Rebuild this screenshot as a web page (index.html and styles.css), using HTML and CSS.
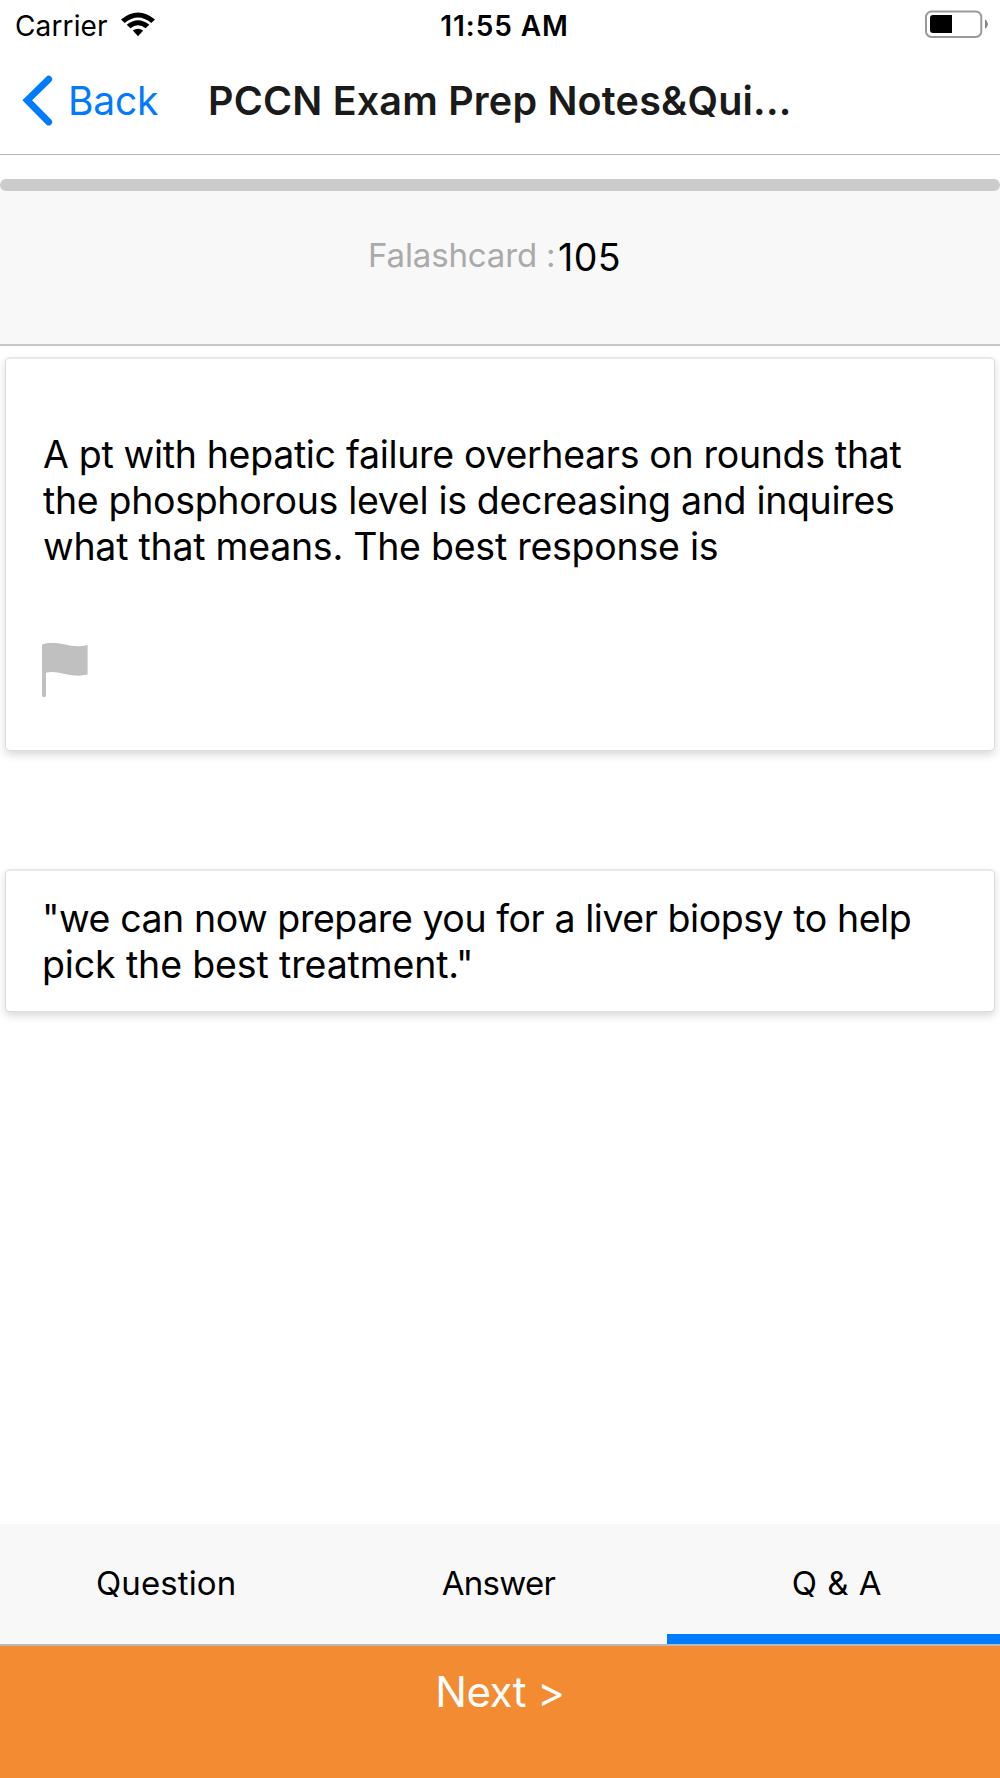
FILE: index.html
```html
<!DOCTYPE html>
<html lang="en">
<head>
<meta charset="utf-8">
<title>PCCN Exam Prep</title>
<link rel="stylesheet" href="styles.css">
</head>
<body>
<div class="screen">
  <div class="status">
    <div class="status-left">
      <span class="carrier">Carrier</span>
      <svg class="wifi" width="36" height="26" viewBox="120 11 36 26">
        <path d="M121 19.4Q138 5.4 155 19.4L151.3 23Q138 12 124.7 23Z"/>
        <path d="M126.7 24.8Q138 15.6 149.3 24.8L145.6 28.3Q138 22.4 130.4 28.3Z"/>
        <path d="M132.8 30.6Q138 26.8 143.2 30.6L138 36.2Z"/>
      </svg>
    </div>
    <span class="clock">11:55 AM</span>
    <div class="status-right">
      <svg class="battery" width="66" height="30" viewBox="924 9 66 30">
        <rect x="926" y="11.5" width="55.3" height="25.4" rx="5.5" fill="#fff" stroke="#999" stroke-width="2"/>
        <path d="M952 15v18H933q-3 0-3-3V18q0-3 3-3Z"/>
        <path d="M985 19.3q3 1.8 3 4.8t-3 4.8Z" fill="#888"/>
      </svg>
    </div>
  </div>
  <header class="nav">
    <svg class="chevron" width="32" height="54" viewBox="22 73 32 54">
      <path d="M48.7 79.2 27.2 100.2 48.7 122" fill="none" stroke="#007aff" stroke-width="6.8" stroke-linecap="round"/>
    </svg>
    <span class="back">Back</span>
    <h1 class="title">PCCN Exam Prep Notes&amp;Qui...</h1>
  </header>
  <div class="progress-wrap"><div class="progress"></div></div>
  <section class="counter">
    <span class="counter-label">Falashcard :</span>
    <span class="counter-value">105</span>
  </section>
  <main class="content">
    <article class="card question">
      <p class="text"><span class="q1">A pt with hepatic failure overhears on rounds that</span><br><span class="q1">the phosphorous level is decreasing and inquires</span><br><span class="q3">what that means. The best response is</span></p>
      <svg class="flag" width="47" height="56" viewBox="42 643 47 56">
        <path d="M42 644.6C49 642 56 642.6 64 644.3C73 646.4 79 647 87.6 645V674.6C80 676.5 73 675.6 65 674C57 672.2 52 671.3 46 672.7V695.5Q46 697.2 44 697.2T42 695.5Z" fill="#c0c0c0"/>
      </svg>
    </article>
    <article class="card answer">
      <p class="text"><span class="a1">"we can now prepare you for a liver biopsy to help</span><br><span class="a2">pick the best treatment."</span></p>
    </article>
  </main>
  <nav class="tabs">
    <span class="tab">Question</span>
    <span class="tab tab-answer">Answer</span>
    <span class="tab tab-active">Q &amp; A</span>
  </nav>
  <div class="next">Next &gt;</div>
</div>
</body>
</html>
```
FILE: styles.css
```css
* { box-sizing: border-box; }
body { margin: 0; background: #fff; color: #000; font-family: Inter, "Liberation Sans", sans-serif; }
svg { display: block; flex: none; }
.screen { display: flex; flex-direction: column; width: 1000px; height: 1778px; overflow: hidden; }

.status { display: grid; grid-template-columns: 1fr auto 1fr; height: 51px; font-size: 28px; line-height: 52px; }
.status-left { display: flex; padding-left: 15px; }
.carrier { width: 105px; letter-spacing: 0.13px; }
.wifi { margin-top: 11px; }
.clock { font-weight: 600; letter-spacing: 0.9px; padding-left: 9px; }
.status-right { display: flex; justify-content: flex-end; padding: 9px 10px 0 0; }

.nav { display: flex; height: 104px; padding-left: 22px; border-bottom: 1px solid #b8b8b8; font-size: 39px; line-height: 100px; white-space: nowrap; }
.chevron { margin-top: 22px; }
.back { width: 140px; margin-left: 14px; color: #007aff; letter-spacing: -0.23px; }
.title { margin: 0; font-size: 39.5px; font-weight: 600; letter-spacing: 0.2px; color: #1a1a1a; }

.progress-wrap { padding-top: 24px; background: linear-gradient(#fff 30px, #f8f8f8 30px); }
.progress { height: 12px; border-radius: 6px; background: #cbcbcb; }
.counter { display: flex; height: 155px; padding-left: 368px; background: #f8f8f8; border-bottom: 2px solid #c8c8c8; }
.counter-label { width: 190px; font-size: 33px; line-height: 129px; letter-spacing: -0.15px; color: #aaa; }
.counter-value { font-size: 37.5px; line-height: 134px; letter-spacing: 0.4px; }

.content { flex: 1; padding: 11px 5px 0; }
.card { border: 1px solid #dcdcdc; border-top: 2px solid #e8e8e8; border-radius: 5px; background: #fff; box-shadow: 0 4px 8px rgba(0, 0, 0, 0.15); }
.question { height: 394px; padding: 73px 0 0 37px; }
.answer { height: 143px; margin-top: 118px; padding: 25px 0 0 36px; }
.text { margin: 0; font-size: 37.5px; line-height: 46.2px; white-space: nowrap; }
.question .text { height: 211px; }
.flag { margin-left: -1px; }
.q1 { letter-spacing: -0.32px; }
.q3 { letter-spacing: -0.25px; }
.a1 { letter-spacing: -0.44px; }
.a2 { letter-spacing: -0.13px; }

.tabs { display: grid; grid-template: 120px / repeat(3, 1fr); height: 122px; background: #f8f8f8; border-bottom: 2px solid #b8b8bc; font-size: 33px; line-height: 119px; text-align: center; }
.tab { padding-right: 1px; letter-spacing: 0.1px; }
.tab-answer { padding-right: 3px; letter-spacing: -0.7px; }
.tab-active { padding: 0 0 0 7px; box-shadow: inset 0 -10px #007aff; letter-spacing: 0.49px; }
.next { height: 132px; background: #f28b32; color: #fff; font-size: 42px; line-height: 92px; letter-spacing: -0.5px; text-align: center; }
```
